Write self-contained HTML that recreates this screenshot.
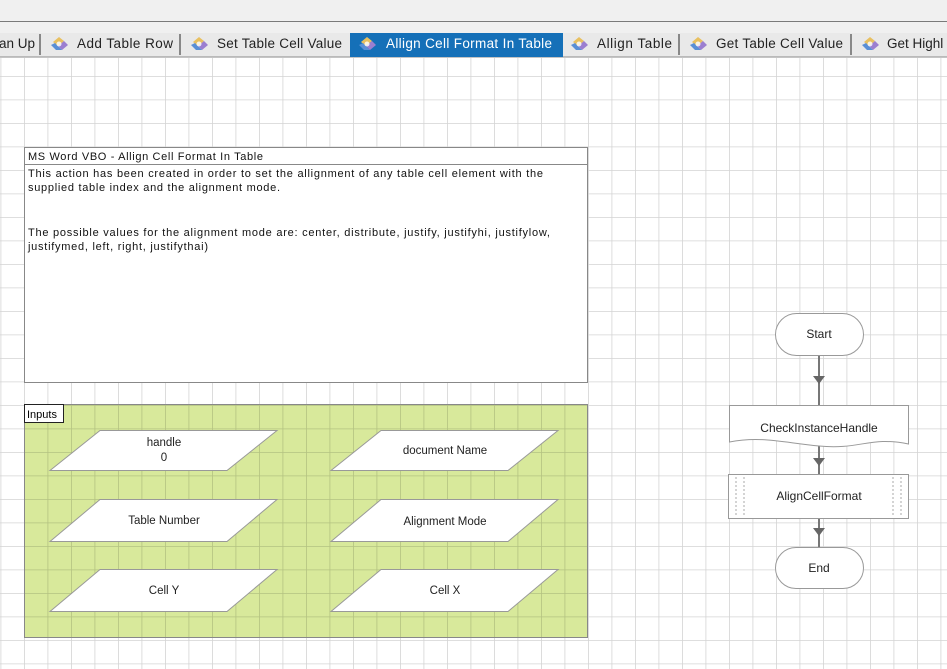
<!DOCTYPE html>
<html><head><meta charset="utf-8"><style>
html,body{margin:0;padding:0;width:947px;height:669px;overflow:hidden;background:#fff;font-family:"Liberation Sans",sans-serif}
svg text{font-family:"Liberation Sans",sans-serif}
</style></head><body>
<svg width="947" height="669" viewBox="0 0 947 669" xmlns="http://www.w3.org/2000/svg">
<defs>
<pattern id="g" x="0.5" y="5.5" width="23.5" height="23.5" patternUnits="userSpaceOnUse">
<path d="M0 0H23.5M0 0V23.5" stroke="rgba(0,0,0,0.17)" stroke-width="1.6" fill="none"/>
</pattern>
<g id="ic"><path d="M3 7 L9 2 L14 6 L8 11Z" fill="#e8c060"/><path d="M8 11 L14 6 L18 10 L12 15Z" fill="#9b7fd0"/><path d="M1 10 L6 15 L12 15 L5 8Z" fill="#5a8fd6"/><circle cx="9" cy="9" r="2.5" fill="#fff" opacity=".8"/></g>
</defs>
<rect x="24" y="404" width="563" height="233" fill="#d8e99b"/>
<rect x="0" y="58" width="947" height="611" fill="url(#g)"/>
<rect x="0" y="0" width="947" height="57" fill="#f0f0f0"/>
<rect x="0" y="33" width="947" height="24" fill="#e9e9e9"/>
<line x1="0" y1="21.5" x2="947" y2="21.5" stroke="#7a7a7a" stroke-width="1"/>
<line x1="0" y1="57" x2="947" y2="57" stroke="#8a8a8a" stroke-width="1"/>
<rect x="350" y="33" width="213" height="24" fill="#1570b8"/>
<g stroke="#888" stroke-width="2"><line x1="40" y1="34" x2="40" y2="55"/><line x1="180" y1="34" x2="180" y2="55"/><line x1="679" y1="34" x2="679" y2="55"/><line x1="851" y1="34" x2="851" y2="55"/></g>
<g font-size="13.5" fill="#222">
<text x="-1" y="48">an Up</text>
<use href="#ic" x="50" y="35"/><text x="77" y="48" textLength="96">Add Table Row</text>
<use href="#ic" x="190" y="35"/><text x="217" y="48" textLength="125">Set Table Cell Value</text>
<use href="#ic" x="358" y="35"/><text x="386" y="48" fill="#fff" textLength="166">Allign Cell Format In Table</text>
<use href="#ic" x="570" y="35"/><text x="597" y="48" textLength="75">Allign Table</text>
<use href="#ic" x="689" y="35"/><text x="716" y="48" textLength="127">Get Table Cell Value</text>
<use href="#ic" x="861" y="35"/><text x="887" y="48">Get Highl</text>
</g>
<rect x="24.5" y="147.5" width="563" height="235" fill="#fff" stroke="#888"/>
<line x1="24" y1="164.5" x2="588" y2="164.5" stroke="#888"/>
<g font-size="11" fill="#111">
<text x="28" y="160" textLength="235">MS Word VBO - Allign Cell Format In Table</text>
<text x="28" y="177" textLength="515">This action has been created in order to set the allignment of any table cell element with the</text>
<text x="28" y="191" textLength="252">supplied table index and the alignment mode.</text>
<text x="28" y="236" textLength="522">The possible values for the alignment mode are: center, distribute, justify, justifyhi, justifylow,</text>
<text x="28" y="250" textLength="180">justifymed, left, right, justifythai)</text>
</g>
<rect x="24.5" y="404.5" width="563" height="233" fill="none" stroke="#888"/>
<rect x="24.5" y="404.5" width="39" height="18" fill="#fff" stroke="#222"/>
<text x="27" y="418" font-size="11">Inputs</text>
<g fill="#fff" stroke="#999">
<path d="M100 430.5H277L227 470.5H50Z"/><path d="M381 430.5H558L508 470.5H331Z"/>
<path d="M100 499.5H277L227 541.5H50Z"/><path d="M381 499.5H558L508 541.5H331Z"/>
<path d="M100 569.5H277L227 611.5H50Z"/><path d="M381 569.5H558L508 611.5H331Z"/>
</g>
<g font-size="11.5" fill="#222" text-anchor="middle">
<text x="164" y="446">handle</text><text x="164" y="461">0</text>
<text x="445" y="454">document Name</text>
<text x="164" y="524">Table Number</text><text x="445" y="525">Alignment Mode</text>
<text x="164" y="594">Cell Y</text><text x="445" y="594">Cell X</text>
</g>
<g stroke="#777" stroke-width="2"><line x1="819" y1="355" x2="819" y2="405"/><line x1="819" y1="446" x2="819" y2="474"/><line x1="819" y1="518" x2="819" y2="547"/></g>
<g fill="#666"><path d="M813 376H825L819 384Z"/><path d="M813 458H825L819 466Z"/><path d="M813 528H825L819 536Z"/></g>
<rect x="775.5" y="313.5" width="88" height="42" rx="21" fill="#fff" stroke="#999"/>
<path d="M729.5 405.5H908.5V444C870 436 860 450 819 446C780 442 760 436 729.5 442Z" fill="#fff" stroke="#999"/>
<rect x="728.5" y="474.5" width="180" height="44" fill="#fff" stroke="#999"/>
<g stroke="#aaa" stroke-dasharray="2 2"><line x1="736" y1="477" x2="736" y2="516"/><line x1="901" y1="477" x2="901" y2="516"/><line x1="744" y1="477" x2="744" y2="516"/><line x1="893" y1="477" x2="893" y2="516"/></g>
<rect x="775.5" y="547.5" width="88" height="41" rx="20.5" fill="#fff" stroke="#999"/>
<g font-size="12" fill="#222" text-anchor="middle">
<text x="819" y="338">Start</text><text x="819" y="432">CheckInstanceHandle</text>
<text x="819" y="500">AlignCellFormat</text><text x="819" y="572">End</text>
</g>
</svg>
</body></html>
